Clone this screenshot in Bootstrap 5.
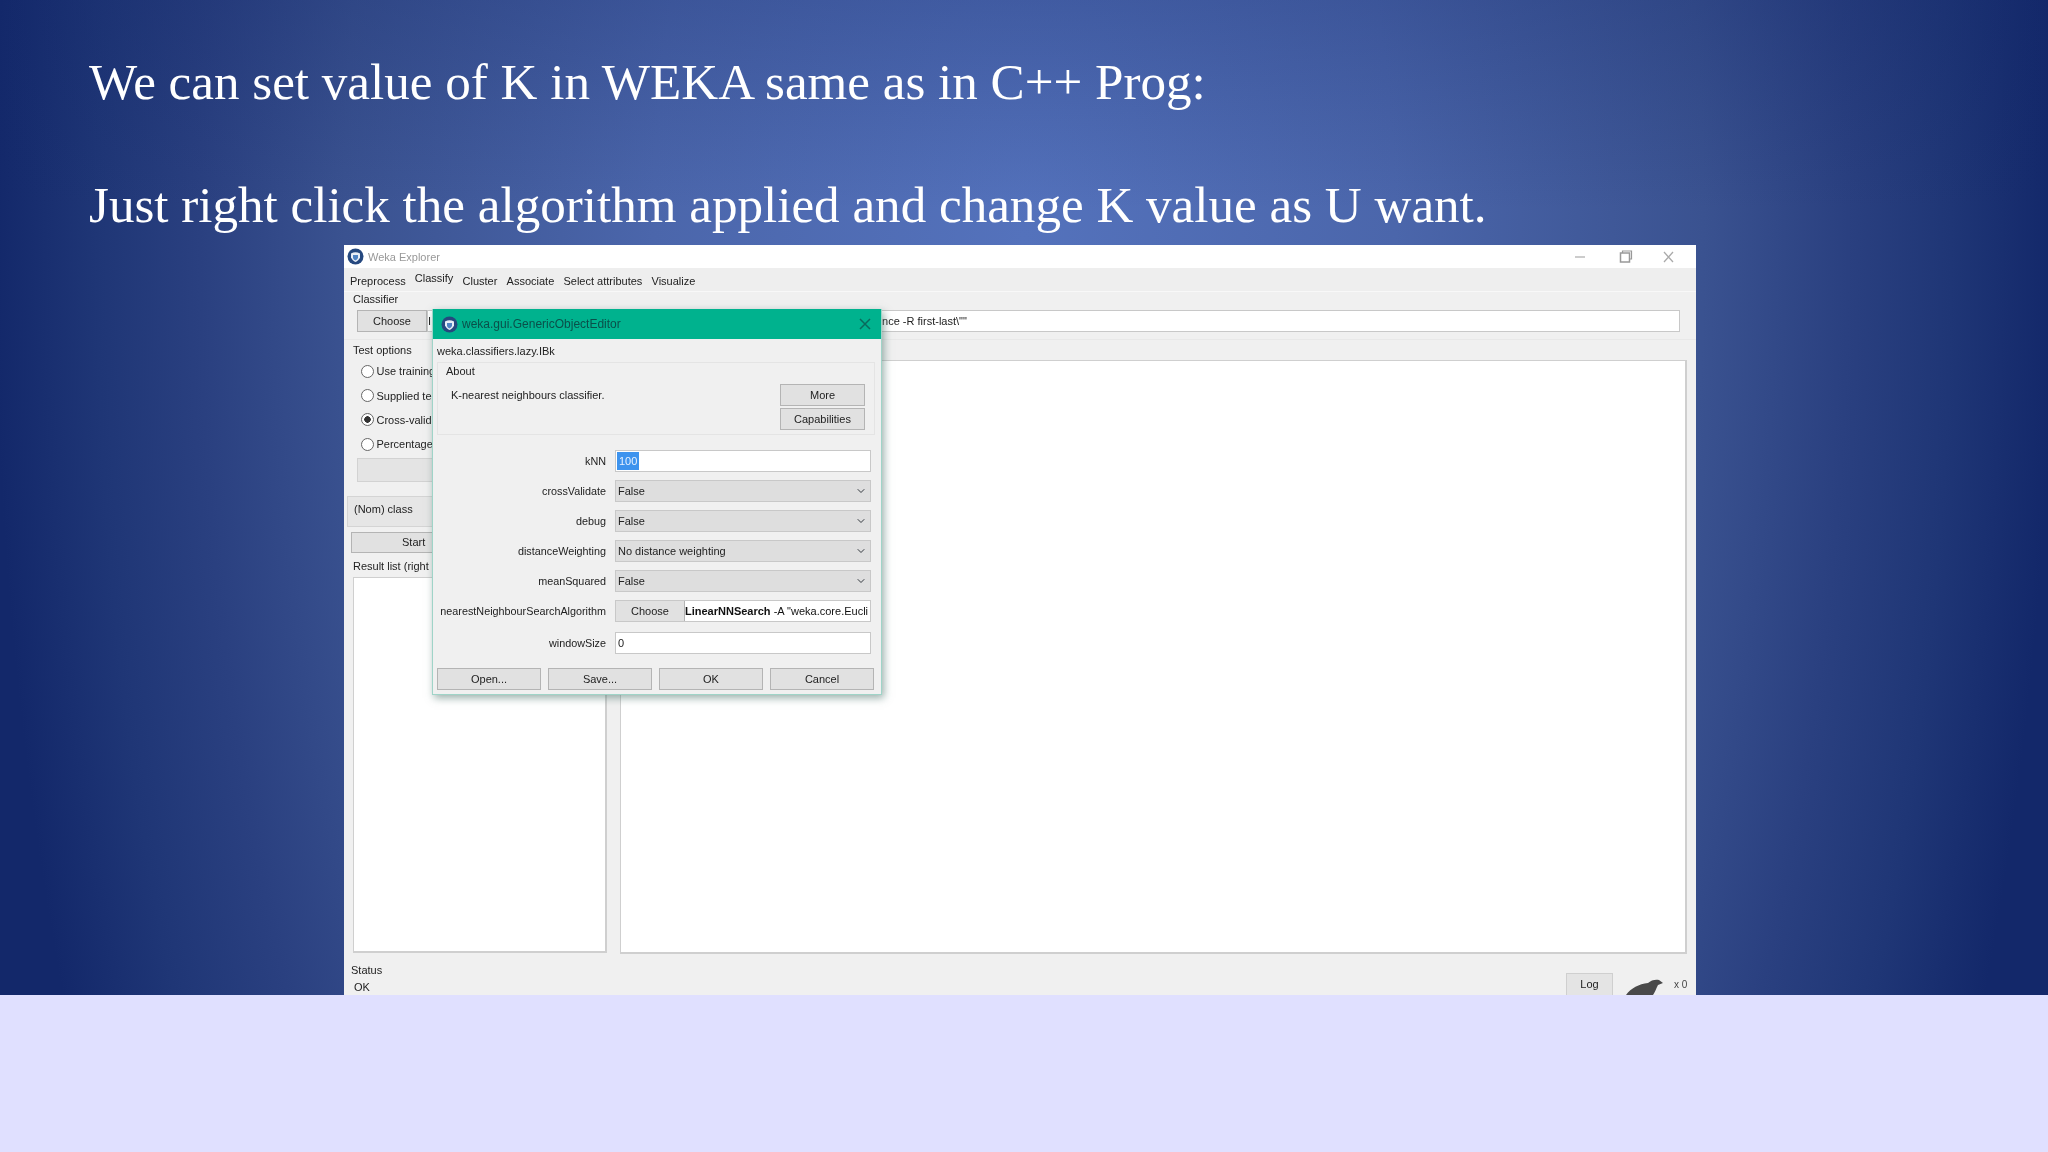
<!DOCTYPE html>
<html lang="en">
<head>
<meta charset="utf-8">
<title>WEKA K value</title>
<link href="https://cdn.jsdelivr.net/npm/bootstrap@5.3.0/dist/css/bootstrap.min.css" rel="stylesheet">
<style>
html,body{margin:0;height:100%;background:#e0e0ff}
.pg{width:2048px;height:1152px;overflow:hidden}
.slide{height:995px;overflow:hidden;background:linear-gradient(to bottom,rgba(19,40,106,.27) 0,rgba(19,40,106,0) 210px),radial-gradient(ellipse 1030px 2100px at 1024px 240px,#5472bc 0%,#4b66ab 36%,#3a5290 66%,#2a4080 80%,#1f3676 90%,#13286a 100%)}
.hd{padding:51px 0 0 89px;font-family:"Liberation Serif",serif;font-size:51.1px;line-height:61.5px;color:#fff;height:245px;white-space:nowrap}
.win{position:relative;width:1352px;height:750px;margin-left:344px;background:#f0f0f0;font-family:"Liberation Sans",sans-serif;font-size:11px;line-height:14px;color:#222;filter:blur(.65px);overflow:hidden}
.ttl{height:23px;background:#fff;color:#999;padding:0 22px 0 3px}
.logo{width:17px;height:17px;flex:none}
.tabs{height:24px;padding:6px 0 0 6px;gap:9.2px;background:#eee;border-bottom:1px solid #f8f8f8}
.seltab{margin-top:-3px}
.clsb{height:48px;padding:0 16px 0 9px;border-bottom:1px solid #e8e8e8}
.clsrow{margin:4px 0 0 4px;height:22px}
.wbtn{background:#e1e1e1;border:1px solid #b4b4b4;border-radius:0;color:#222;font-size:11px;line-height:14px;padding:0;height:22px}
.txtf{background:#fff;border:1px solid #c8c8c8;height:22px;padding:3px 0 0 0}
.tailx{margin-left:451px}
.bodyrow{height:613px;padding-left:3px;gap:6px}
.lcol{width:267px;height:613px}
.rpan{width:1067px;height:594px;margin-top:20px;background:#fff;border:2px solid #cfcfcf;border-width:1px 2px 2px 1px}
.tlab{margin:3px 0 2px 6px}
.rd{height:24.4px;padding-left:13.500px;gap:3px}
.rd .form-check-input{width:13px;height:13px;margin:0;background-color:#fff;border:1px solid #666;flex:none}
.rd .form-check-input:checked{background-color:#fff;background-image:radial-gradient(circle,#333 0 3px,transparent 3.5px);border-color:#666}
.gbtn{height:24px;margin:1px 6px 0 10px;background:#e4e4e4;border:1px solid #d2d2d2}
.nom{height:31px;margin-top:14px;padding:0 0 5px 6px;background:#e6e6e6;border:1px solid #d4d4d4}
.startb{margin:5px 4px 0 4px;height:21px;width:255px;text-align:left;padding-left:50px}
.rlab{margin:6px 0 4px 6px}
.rlist{width:254px;margin-left:6px;background:#fff;border:2px solid #cfcfcf;border-width:1px 2px 2px 1px}
.stat{height:42px;padding:10px 0 0 7px}
.stat div+div{margin:3px 0 0 3px}
.stend{position:absolute;right:0;bottom:0;gap:13px}
.logb{width:47px;height:22px;background:#e4e4e4;border:1px solid #cfcfcf;border-bottom:0;text-align:center;padding-top:3px}
.bird{display:block}
.dlg{position:absolute;left:88px;top:64px;width:450px;height:386px;background:#f0f0f0;border:1px solid #9fd4c8;border-top:0;box-shadow:2px 3px 8px rgba(70,110,100,.55)}
.dhd{height:30px;background:#00b28e;color:#0a4f4a;padding:0 10px 0 8px;font-size:12px}
.dhd .logo{margin-right:4px}
.dlab{padding:5px 0 0 4px}
.about{margin:4px 6px 0 4px;height:73px;border:1px solid #e4e4e4;padding:0 9px 0 8px}
.abtxt{padding-top:1px}
.abfl{padding:10px 0 0 5px}
.abtns{width:85px;gap:2px;margin-top:21px}
.rows{padding-top:15px;gap:8px}
.frow{height:22px;gap:9px}
.flab{width:173px;text-align:right;flex:none;white-space:nowrap;font-size:10.8px}
.frow .fld{width:256px;height:22px;flex:none}
.frow .form-select{border-radius:0;border:1px solid #c8c8c8;background-color:#dedede;font-size:11px;line-height:14px;padding:0 0 0 2px;color:#222;background-position:right 4px center;background-size:10px 8px}
.frow .form-control{border-radius:0;border:1px solid #c8c8c8;font-size:11px;line-height:14px;padding:0 0 0 2px;min-height:0;color:#222}
.sel{background:#3d93ee;color:#e8f2ff;padding:0 2px;height:18px;line-height:18px;display:inline-block}
.ktxt{background:#fff;padding:1px 0 0 1px}
.kf{border:1px solid #c8c8c8;overflow:hidden;background:#fff}
.kf .wbtn{width:69px;height:20px;flex:none;border-width:0 1px 0 0}
.kt{white-space:nowrap;overflow:hidden;color:#111}
.dft{gap:7px;padding:14px 0 0 4px}
.dft .wbtn{width:104px}
.rw10{margin-top:2px}
.low{height:157px;background:#e0e0ff}
</style>
</head>
<body>
<div class="pg d-flex flex-column">
  <div class="slide">
    <div class="hd">We can set value of K in WEKA same as in C++ Prog:<br><br>Just right click the algorithm applied and change K value as U want.</div>
    <div class="win d-flex flex-column">
      <div class="ttl d-flex align-items-center flex-shrink-0">
        <svg class="logo me-1" viewBox="0 0 17 17"><circle cx="8.5" cy="8.5" r="8" fill="#25487f"/><path d="M4 5.5c3-1.6 6-1.6 9 0v4c-1 2.500-2.500 3.500-4.500 4.500C6.500 13 5 12 4 9.500z" fill="#e8eef6"/><path d="M6 7h5v3c-1 1.500-1.800 2-2.500 2.500C7.500 12 6.700 11.500 6 10z" fill="#4f84c4"/></svg>
        <span>Weka Explorer</span>
        <span class="ms-auto d-flex align-items-center">
          <svg width="104" height="14" viewBox="0 0 104 14"><path d="M5 7h10" stroke="#bbb" stroke-width="1.500"/><rect x="50.500" y="3" width="9" height="9" fill="none" stroke="#999" stroke-width="1.500"/><path d="M52.500 3V1h9v8h-2" fill="none" stroke="#999" stroke-width="1.200"/><path d="M94 2l9 10M103 2l-9 10" stroke="#aaa" stroke-width="1.300"/></svg>
        </span>
      </div>
      <div class="tabs d-flex flex-shrink-0"><span>Preprocess</span><span class="seltab">Classify</span><span>Cluster</span><span>Associate</span><span>Select attributes</span><span>Visualize</span></div>
      <div class="clsb flex-shrink-0">
        <div>Classifier</div>
        <div class="clsrow d-flex">
          <button class="wbtn" style="width:70px">Choose</button>
          <div class="txtf flex-grow-1 d-flex"><span>I</span><span class="tailx">nce -R first-last\""</span></div>
        </div>
      </div>
      <div class="bodyrow d-flex flex-shrink-0">
        <div class="lcol d-flex flex-column">
          <div class="tlab">Test options</div>
          <div class="rd d-flex align-items-center"><input class="form-check-input" type="radio" name="o"><span>Use training</span></div>
          <div class="rd d-flex align-items-center"><input class="form-check-input" type="radio" name="o"><span>Supplied te</span></div>
          <div class="rd d-flex align-items-center"><input class="form-check-input" type="radio" name="o" checked><span>Cross-valid</span></div>
          <div class="rd d-flex align-items-center"><input class="form-check-input" type="radio" name="o"><span>Percentage</span></div>
          <div class="gbtn flex-shrink-0"></div>
          <div class="nom d-flex align-items-center flex-shrink-0">(Nom) class</div>
          <button class="wbtn startb flex-shrink-0">Start</button>
          <div class="rlab">Result list (right</div>
          <div class="rlist flex-grow-1"></div>
        </div>
        <div class="rpan flex-shrink-0"></div>
      </div>
      <div class="stat flex-shrink-0">
        <div>Status</div>
        <div>OK</div>
      </div>
      <div class="stend d-flex align-items-end">
        <div class="logb">Log</div>
        <svg class="bird" width="70" height="20" viewBox="0 0 70 20"><path d="M0 20C5 13 13 9 22 8c3-3 8-4 11-3l4 3-5 2c-2 4-3 7-5 10z" fill="#4a4a4a"/><text x="48" y="13" font-size="10" fill="#444">x 0</text></svg>
      </div>
      <div class="dlg d-flex flex-column">
        <div class="dhd d-flex align-items-center flex-shrink-0">
          <svg class="logo" viewBox="0 0 17 17"><circle cx="8.5" cy="8.5" r="8" fill="#25487f"/><path d="M4 5.500c3-1.600 6-1.600 9 0v4c-1 2.500-2.500 3.500-4.500 4.500C6.500 13 5 12 4 9.500z" fill="#e8eef6"/><path d="M6 7h5v3c-1 1.500-1.800 2-2.500 2.500C7.500 12 6.700 11.500 6 10z" fill="#4f84c4"/></svg>
          <span>weka.gui.GenericObjectEditor</span>
          <svg class="ms-auto" width="12" height="12" viewBox="0 0 12 12"><path d="M1 1l10 10M11 1L1 11" stroke="#0a6a5c" stroke-width="1.500"/></svg>
        </div>
        <div class="dlab">weka.classifiers.lazy.IBk</div>
        <div class="about d-flex justify-content-between flex-shrink-0">
          <div class="abtxt">About<div class="abfl">K-nearest neighbours classifier.</div></div>
          <div class="abtns d-flex flex-column"><button class="wbtn">More</button><button class="wbtn">Capabilities</button></div>
        </div>
        <div class="rows d-flex flex-column">
          <div class="frow d-flex align-items-center"><div class="flab">kNN</div><div class="fld kf ktxt"><span class="sel">100</span></div></div>
          <div class="frow d-flex align-items-center"><div class="flab">crossValidate</div><select class="form-select fld"><option>False</option></select></div>
          <div class="frow d-flex align-items-center"><div class="flab">debug</div><select class="form-select fld"><option>False</option></select></div>
          <div class="frow d-flex align-items-center"><div class="flab">distanceWeighting</div><select class="form-select fld"><option>No distance weighting</option></select></div>
          <div class="frow d-flex align-items-center"><div class="flab">meanSquared</div><select class="form-select fld"><option>False</option></select></div>
          <div class="frow d-flex align-items-center"><div class="flab">nearestNeighbourSearchAlgorithm</div><div class="fld kf d-flex align-items-center"><button class="wbtn">Choose</button><span class="kt"><b>LinearNNSearch</b> -A "weka.core.Eucli</span></div></div>
          <div class="frow d-flex align-items-center rw10"><div class="flab">windowSize</div><input class="form-control fld" value="0"></div>
        </div>
        <div class="dft d-flex"><button class="wbtn">Open...</button><button class="wbtn">Save...</button><button class="wbtn">OK</button><button class="wbtn">Cancel</button></div>
      </div>
    </div>
  </div>
  <div class="low"></div>
</div>
<script src="https://cdn.jsdelivr.net/npm/bootstrap@5.3.0/dist/js/bootstrap.bundle.min.js"></script>
</body>
</html>
